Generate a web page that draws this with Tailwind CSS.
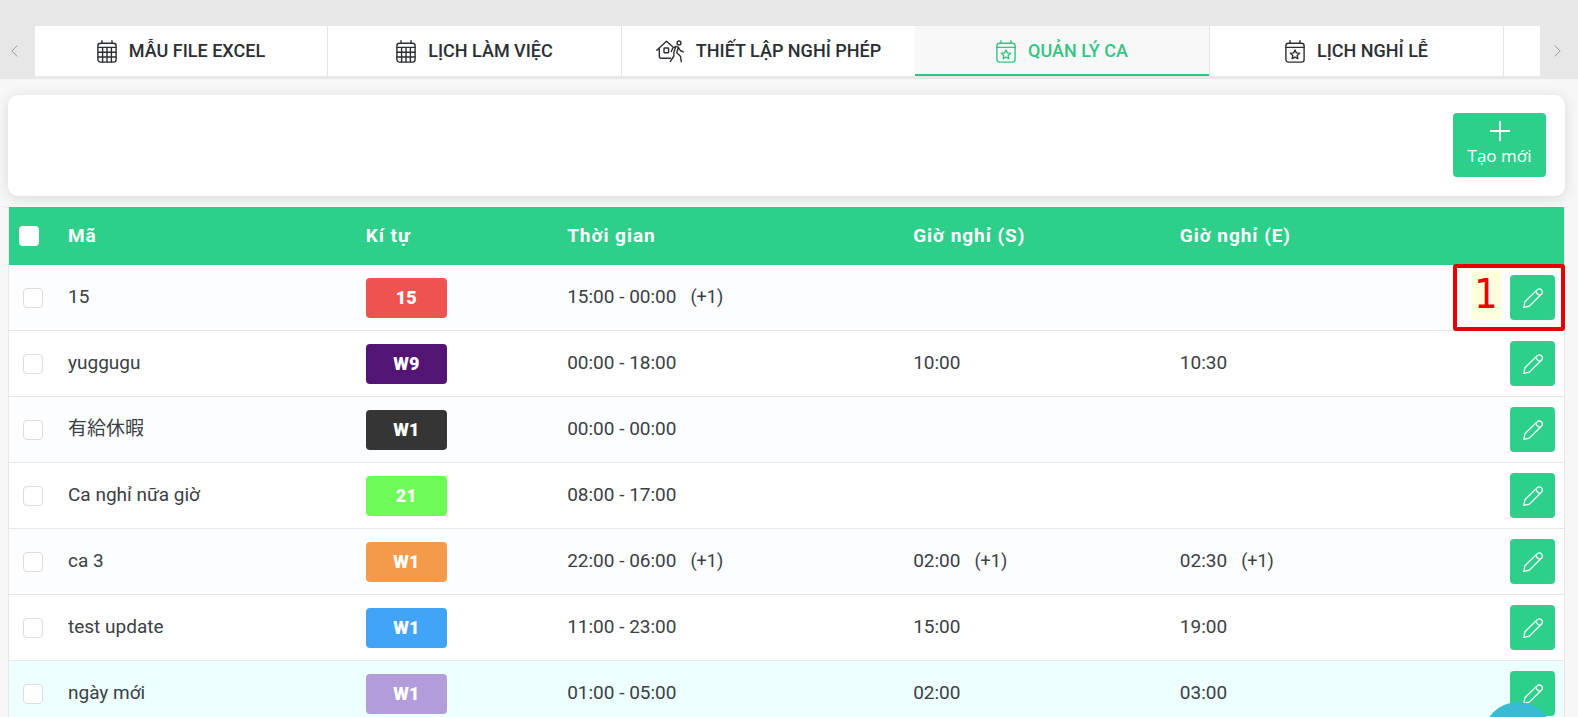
<!DOCTYPE html>
<html lang="vi">
<head>
<meta charset="utf-8">
<meta name="viewport" content="width=device-width, initial-scale=1">
<title>Quản lý ca</title>
<script src="https://cdn.jsdelivr.net/npm/@tailwindcss/browser@4"></script>
</head>
<body class="relative h-screen overflow-hidden bg-[#f7f7f7] font-['Roboto','Noto_Sans_CJK_JP',sans-serif] text-[19px] text-[#3b4045]">

<svg class="hidden" aria-hidden="true">
  <symbol id="grid" viewBox="0 0 20 23"><g fill="none" stroke="currentColor" stroke-width="1.4" stroke-linecap="round"><rect x=".9" y="3.2" width="18.2" height="18.9" rx="2.6"/><path d="M5 .8v2.4M15 .8v2.4M1 7.4h18M1 12.2h18M1 17h18M5.6 7.4V22M10 7.4V22M14.4 7.4V22"/></g></symbol>
  <symbol id="star" viewBox="0 0 20 23"><g fill="none" stroke="currentColor" stroke-width="1.4" stroke-linecap="round" stroke-linejoin="round"><rect x=".9" y="3.2" width="18.2" height="18.9" rx="2.6"/><path d="M5 .8v2.4M15 .8v2.4M1 7.4h18"/><path d="M10 10l1.4 2.9 3.2.4-2.4 2.2.6 3.2-2.8-1.6-2.8 1.6.6-3.2-2.4-2.2 3.2-.4z"/></g></symbol>
  <symbol id="leave" viewBox="0 0 28 23"><g fill="none" stroke="currentColor" stroke-width="1.4" stroke-linecap="round" stroke-linejoin="round"><path d="M.8 10.2L10.5 1.2l6 5.4M3.3 8.5v7.8q0 2 2 2h9.4"/><rect x="8" y="8" width="4.6" height="4.8" rx=".6"/><circle cx="23" cy="2.9" r="1.9"/><path d="M15.3 11.6l1.6-3.8 3.2-1.4 2.2.8-1.6 5.6 3.7 3.4.9 5.5M22.3 7.2l2 3.3 2.9 1.4M19.6 6.8l-1.8 6 .1 3.2-3.5 5.4"/></g></symbol>
  <symbol id="pencil" viewBox="0 0 20 20"><g fill="none" stroke="currentColor" stroke-width="1.2" stroke-linecap="round" stroke-linejoin="round"><path d="M.8 19.4l1.1-5.6L14.3 1.6q2.2-1.7 4.2.2 1.8 2.1.1 4.2L6.4 18.2zM13 2.9q.5 3.7 4.2 4.4"/></g></symbol>
</svg>

<header class="flex h-[79px] bg-[#e7e7e7] pt-[26px] pb-[3px]">
  <button class="flex w-[35px] shrink-0 items-center pl-[11px] text-[#999]" aria-label="Trước"><svg class="h-3 w-[7px]" viewBox="0 0 7 12" fill="none" stroke="currentColor"><path d="M6.3.6L.8 6l5.5 5.4"/></svg></button>
  <nav class="flex min-w-0 flex-1 overflow-hidden bg-white text-lg font-medium text-[#2b2f33]">
    <a href="#" class="flex w-[292px] shrink-0 items-center justify-center gap-3"><svg class="h-[23px] w-5"><use href="#grid"/></svg>MẪU FILE EXCEL</a>
    <a href="#" class="flex w-[294px] shrink-0 items-center justify-center gap-3 border-l border-[#e4e5e8]"><svg class="h-[23px] w-5"><use href="#grid"/></svg>LỊCH LÀM VIỆC</a>
    <a href="#" class="flex w-[294px] shrink-0 items-center justify-center gap-3 border-l border-[#e4e5e8]"><svg class="h-[23px] w-7"><use href="#leave"/></svg>THIẾT LẬP NGHỈ PHÉP</a>
    <a href="#" aria-current="page" class="flex w-[294px] shrink-0 items-center justify-center gap-3 bg-[#f8f8f8] text-[#33c584] shadow-[inset_0_-2px_#33c584]"><svg class="h-[23px] w-5"><use href="#star"/></svg>QUẢN LÝ CA</a>
    <a href="#" class="flex w-[294px] shrink-0 items-center justify-center gap-3 border-l border-[#e4e5e8]"><svg class="h-[23px] w-5"><use href="#star"/></svg>LỊCH NGHỈ LỄ</a>
    <span class="w-[294px] shrink-0 border-l border-[#e4e5e8]"></span>
  </nav>
  <button class="flex w-[38px] shrink-0 items-center pl-[14px] text-[#999]" aria-label="Sau"><svg class="h-3 w-[7px]" viewBox="0 0 7 12" fill="none" stroke="currentColor"><path d="M.7.6L6.2 6 .7 11.4"/></svg></button>
</header>

<main class="pt-4 pr-[13px] pl-2">
  <section class="mb-[11px] flex justify-end rounded-[10px] bg-white pt-[18px] pr-[19px] pb-[19px] shadow-[0_2px_14px_rgba(0,0,0,0.12)]">
    <button class="flex h-16 w-[93px] flex-col items-center rounded bg-[#2ecf8b] pt-2 font-['Open_Sans'] text-[17px] leading-6 text-white">
      <svg class="mb-[3px] h-5 w-5 shrink-0" viewBox="0 0 20 20" stroke="currentColor" stroke-width="1.8"><path d="M10 0v20M0 10h20"/></svg>Tạo mới
    </button>
  </section>

  <div class="relative border-x border-[#e6e8ea]">
    <table class="w-full table-fixed border-separate border-spacing-0 text-left">
      <colgroup><col class="w-[59px]"><col class="w-[19.15%]"><col class="w-[12.95%]"><col class="w-[22.25%]"><col class="w-[17.15%]"><col></colgroup>
      <thead class="bg-[#2ecf8b] text-[19px] tracking-wider text-white">
        <tr class="h-[58px]">
          <th class="pl-[10px]"><input type="checkbox" aria-label="Chọn tất cả" class="block h-5 w-5 appearance-none rounded bg-white"></th>
          <th>Mã</th><th>Kí tự</th><th>Thời gian</th><th>Giờ nghỉ (S)</th><th>Giờ nghỉ (E)</th>
        </tr>
      </thead>
      <tbody id="rows"></tbody>
    </table>
    <div class="pointer-events-none absolute top-[57px] -right-px flex h-[67px] w-28 rounded-[3px] border-4 border-[#e60000] pt-1 pl-[14px]">
      <span class="flex h-12 w-[30px] items-center justify-center bg-[#ffffdc] pb-1 font-['DejaVu_Sans_Condensed','DejaVu_Sans'] text-[41px] leading-none text-[#f00000]">1</span>
    </div>
  </div>
</main>

<button class="fixed right-[25px] -bottom-[55px] h-[70px] w-[70px] rounded-full bg-[#37bcd3]" aria-label="Trợ giúp"></button>

<script>
const shifts = [
  ['15', '15', 'bg-[#ef534f]', ['15:00 - 00:00', 1], [], [], 'bg-[#fbfdff]'],
  ['yuggugu', 'W9', 'bg-[#541474]', ['00:00 - 18:00'], ['10:00'], ['10:30'], 'bg-white'],
  ['有給休暇', 'W1', 'bg-[#353535]', ['00:00 - 00:00'], [], [], 'bg-[#fbfdff]'],
  ['Ca nghỉ nữa giờ', '21', 'bg-[#6cfb57]', ['08:00 - 17:00'], [], [], 'bg-white'],
  ['ca 3', 'W1', 'bg-[#f39b4b]', ['22:00 - 06:00', 1], ['02:00', 1], ['02:30', 1], 'bg-[#fbfdff]'],
  ['test update', 'W1', 'bg-[#42a4f6]', ['11:00 - 23:00'], ['15:00'], ['19:00'], 'bg-white'],
  ['ngày mới', 'W1', 'bg-[#b39cda]', ['01:00 - 05:00'], ['02:00'], ['03:00'], 'bg-[#edfffe]'],
];
const time = ([t = '', next]) => t + (next ? '<span class="ml-[14px] text-lg">(+1)</span>' : '');
const td = 'border-b border-[#e6e8ea]';
document.getElementById('rows').innerHTML = shifts.map(([name, code, color, span, start, end, bg]) => `
  <tr class="h-[66px] ${bg}">
    <td class="${td} pl-[14px]"><input type="checkbox" aria-label="${name}" class="block h-5 w-5 appearance-none rounded border border-[#dcdee0] bg-white"></td>
    <td class="${td}">${name}</td>
    <td class="${td}"><span class="flex h-10 w-[81px] items-center justify-center rounded ${color} text-lg font-black text-white">${code}</span></td>
    <td class="${td}">${time(span)}</td>
    <td class="${td}">${time(start)}</td>
    <td class="${td} pr-[9px]"><div class="flex items-center justify-between"><span>${time(end)}</span><button aria-label="Sửa ${name}" class="flex h-[45px] w-[45px] items-center justify-center rounded bg-[#2ecf8b] text-white"><svg class="h-5 w-5"><use href="#pencil"/></svg></button></div></td>
  </tr>`).join('');
</script>
</body>
</html>
